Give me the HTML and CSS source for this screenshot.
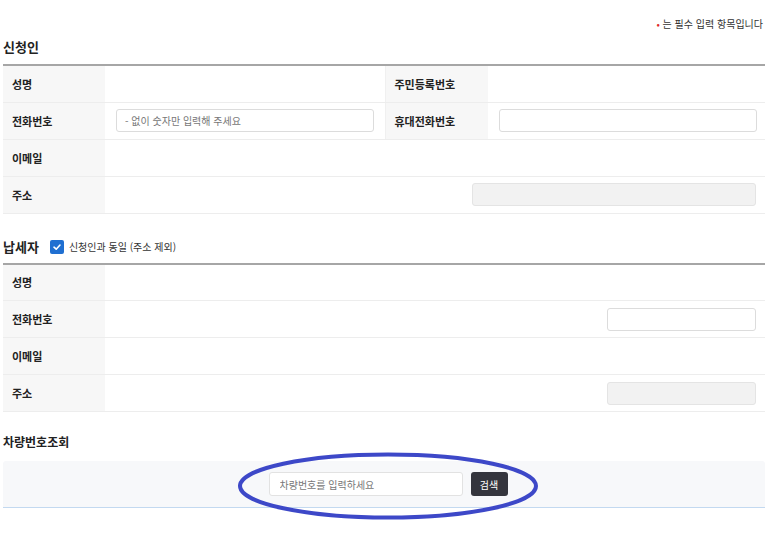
FILE: index.html
```html
<!DOCTYPE html>
<html lang="ko">
<head>
    <meta charset="UTF-8">
    <meta name="viewport" content="width=device-width, initial-scale=1.0">
    <title>차량 신청</title>
    <link rel="stylesheet" href="styles.css">
</head>
<body>
<div class="page">

    <p class="note"><span class="req">•</span> 는 필수 입력 항목입니다</p>

    <h3 class="sec-title first">신청인</h3>
    <table class="form-table">
        <colgroup>
            <col class="c-label"><col class="c-value"><col class="c-label2"><col>
        </colgroup>
        <tr>
            <th>성명</th>
            <td class="split"></td>
            <th>주민등록번호</th>
            <td></td>
        </tr>
        <tr>
            <th>전화번호</th>
            <td class="split"><input type="text" class="inp" placeholder="- 없이 숫자만 입력해 주세요"></td>
            <th>휴대전화번호</th>
            <td><input type="text" class="inp"></td>
        </tr>
        <tr>
            <th>이메일</th>
            <td colspan="3"></td>
        </tr>
        <tr>
            <th>주소</th>
            <td colspan="3"><div class="row-end"><input type="text" class="inp wide" disabled></div></td>
        </tr>
    </table>

    <div class="sec-head">
        <h3 class="sec-title">납세자</h3>
        <label class="chk">
            <span class="chk-box">
                <svg width="10" height="10" viewBox="0 0 10 10"><path d="M2 5.2 L4.2 7.2 L8 3" fill="none" stroke="#fff" stroke-width="1.6" stroke-linecap="round" stroke-linejoin="round"/></svg>
            </span>
            신청인과 동일 (주소 제외)
        </label>
    </div>
    <table class="form-table">
        <colgroup>
            <col class="c-label"><col class="c-value"><col class="c-label2"><col>
        </colgroup>
        <tr>
            <th>성명</th>
            <td colspan="3"></td>
        </tr>
        <tr>
            <th>전화번호</th>
            <td colspan="3"><div class="row-end"><input type="text" class="inp short"></div></td>
        </tr>
        <tr>
            <th>이메일</th>
            <td colspan="3"></td>
        </tr>
        <tr>
            <th>주소</th>
            <td colspan="3"><div class="row-end"><input type="text" class="inp short" disabled></div></td>
        </tr>
    </table>

    <h3 class="sec-title car">차량번호조회</h3>
    <div class="search-wrap">
        <div class="search-box">
            <input type="text" class="inp car-inp" placeholder="차량번호를 입력하세요">
            <button type="button" class="btn-search">검색</button>
        </div>
        <!-- 표시용 타원 -->
        <svg class="mark" width="304" height="70" viewBox="0 0 304 70">
            <ellipse cx="152" cy="35" rx="148" ry="31.5" fill="none" stroke="#3d48c8" stroke-width="4"/>
        </svg>
    </div>

</div>
</body>
</html>
```

FILE: styles.css
```css
* {
    box-sizing: border-box;
}

body {
    margin: 0;
    font-family: "Noto Sans CJK KR", "Noto Sans", sans-serif;
    color: #222;
    background: #fff;
}

.page {
    width: 765px;
    padding: 0 0 28px 3px;
}

.note {
    margin: 0;
    padding-top: 17px;
    line-height: 14px;
    font-size: 10px;
    color: #333;
    text-align: right;
    padding-right: 2px;
}

.req {
    color: #e02b2b;
}

.sec-title {
    margin: 0;
    font-size: 13px;
    line-height: 18px;
    font-weight: bold;
}

.sec-title.first {
    margin: 7px 0 8px;
}

.sec-title.car {
    font-size: 12px;
    margin: 21px 0 10px;
}

.sec-head {
    display: flex;
    align-items: center;
    margin: 24px 0 7px;
    height: 18px;
}

.chk {
    display: flex;
    align-items: center;
    margin-left: 11px;
    font-size: 10px;
    color: #333;
}

.chk-box {
    width: 14px;
    height: 14px;
    border-radius: 2px;
    background: #1f6fd1;
    display: flex;
    align-items: center;
    justify-content: center;
    margin-right: 5px;
}

.form-table {
    width: 762px;
    border-collapse: collapse;
    table-layout: fixed;
    border-top: 2px solid #a6a6a6;
}

.c-label { width: 102px; }
.c-value { width: 280px; }
.c-label2 { width: 103px; }

.form-table th,
.form-table td {
    height: 37px;
    padding: 0;
    border-bottom: 1px solid #ededed;
    vertical-align: middle;
}

.form-table th {
    background: #f7f7f7;
    text-align: left;
    padding-left: 9px;
    font-size: 11px;
    font-weight: bold;
}

.form-table td {
    padding: 0 9px 0 11px;
}

.form-table td.split {
    border-right: 1px solid #f0f0f0;
}

.row-end {
    display: flex;
    justify-content: flex-end;
}

.inp {
    display: block;
    width: 258px;
    height: 23px;
    border: 1px solid #dcdcdc;
    border-radius: 3px;
    background: #fff;
    padding: 0 8px;
    font-family: inherit;
    font-size: 10px;
    color: #333;
}

.inp::placeholder {
    color: #777;
}

.inp:disabled {
    background: #f2f2f2;
    border-color: #e4e4e4;
}

.inp.wide { width: 284px; }
.inp.short { width: 149px; }

.search-wrap {
    position: relative;
    width: 762px;
}

.search-box {
    display: flex;
    justify-content: center;
    align-items: center;
    gap: 8px;
    height: 47px;
    padding-left: 8px;
    background: #f7f8fa;
    border-radius: 3px 3px 0 0;
    border-bottom: 1px solid #c3d9f0;
}

.car-inp {
    width: 194px;
    height: 24px;
    border-color: #e2e2e2;
    padding: 0 10px;
}

.btn-search {
    width: 37px;
    height: 24px;
    border: 0;
    border-radius: 3px;
    background: #34353d;
    color: #fff;
    font-family: inherit;
    font-size: 10px;
}

.mark {
    position: absolute;
    left: 233px;
    top: -10px;
    width: 304px;
    height: 70px;
    overflow: visible;
}
```
